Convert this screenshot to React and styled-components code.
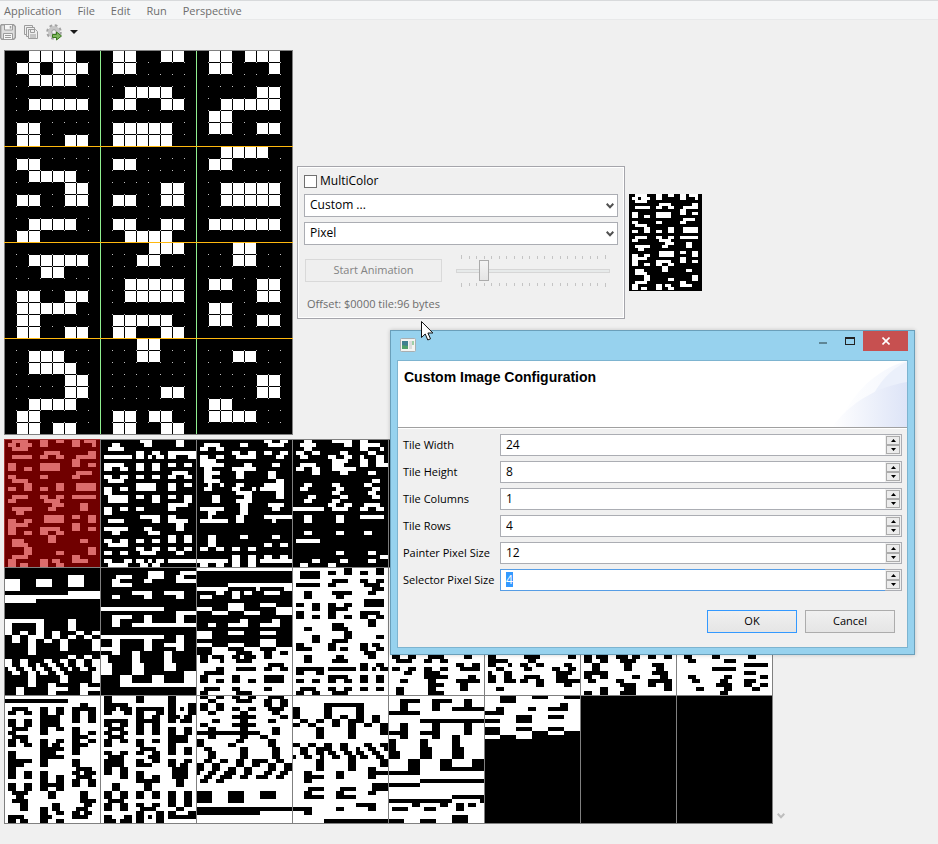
import React, { useEffect, useId, useRef, useState } from "react";
import styled, { createGlobalStyle } from "styled-components";

/* ---------- bitmap data: 128 glyphs of 8 bytes, the second half is inverted ---------- */

const GLYPHS = `
3C666E6E60623C00 00003C063E663E00 0060607C66667C00 00003C6060603C00
0006063E66663E00 00003C667E603C00 000E183E18181800 00003E66663E067C
0060607C66666600 0018003818183C00 000600060606063C 0060606C786C6600
0038181818183C00 0000667F7F6B6300 00007C6666666600 00003C6666663C00
00007C66667C6060 00003E66663E0606 00007C6660606000 00003E603C067C00
00187E1818180E00 0000666666663E00 00006666663C1800 0000636B7F3E3600
0000663C183C6600 00006666663E0C78 00007E0C18307E00 3C30303030303C00
0C12307C3062FC00 3C0C0C0C0C0C3C00 00183C7E18181818 0010307F7F301000
0000000000000000 1818181800001800 6666660000000000 6666FF66FF666600
183E603C067C1800 62660C1830664600 3C663C3867663F00 060C180000000000
0C18303030180C00 30180C0C0C183000 00663CFF3C660000 0018187E18180000
0000000000181830 0000007E00000000 0000000000181800 0003060C18306000
3C666E7666663C00 1818381818187E00 3C66060C30607E00 3C66061C06663C00
060E1E667F060600 7E607C0606663C00 3C66607C66663C00 7E660C1818181800
3C66663C66663C00 3C66663E06663C00 0000180000180000 0000180000181830
0E18306030180E00 00007E007E000000 70180C060C187000 3C66060C18001800
000000FFFF000000 183C667E66666600 7C66667C66667C00 3C66606060663C00
786C6666666C7800 7E60607860607E00 7E60607860606000 3C66606E66663C00
6666667E66666600 3C18181818183C00 1E0C0C0C0C6C3800 666C7870786C6600
6060606060607E00 63777F6B63636300 66767E7E6E666600 3C66666666663C00
7C66667C60606000 3C666666663C0E00 7C66667C786C6600 3C66603C06663C00
7E18181818181800 6666666666663C00 66666666663C1800 6363636B7F776300
66663C183C666600 6666663C18181800 7E060C1830607E00 181818FFFF181818
C0C03030C0C03030 1818181818181818 3333CCCC3333CCCC 3399CC663399CC66
0000000000000000 F0F0F0F0F0F0F0F0 00000000FFFFFFFF FF00000000000000
00000000000000FF C0C0C0C0C0C0C0C0 CCCC3333CCCC3333 0303030303030303
00000000CCCC3333 CC993366CC993366 0303030303030303 1818181F1F181818
000000000F0F0F0F 1818181F1F000000 000000F8F8181818 000000000000FFFF
0000001F1F181818 181818FFFF000000 000000FFFF181818 181818F8F8181818
C0C0C0C0C0C0C0C0 E0E0E0E0E0E0E0E0 0707070707070707 FFFF000000000000
FFFFFF0000000000 0000000000FFFFFF 0103066C78706000 00000000F0F0F0F0
0F0F0F0F00000000 181818F8F8000000 F0F0F0F000000000 F0F0F0F00F0F0F0F
`;

const HALF = GLYPHS.replace(/\s/g, "").match(/../g).map((h) => parseInt(h, 16));
const MEMORY = [...HALF, ...HALF.map((b) => b ^ 255)];

const TILE_W = 24;
const TILE_H = 32;
const TILE_BYTES = 96;

function tileRuns(index) {
  const runs = [];
  for (let y = 0; y < TILE_H; y++) {
    let start = -1;
    for (let x = 0; x <= TILE_W; x++) {
      const byte = MEMORY[index * TILE_BYTES + y * 3 + (x >> 3)] || 0;
      const on = x < TILE_W && (byte & (128 >> (x & 7))) !== 0;
      if (on && start < 0) start = x;
      if (!on && start >= 0) {
        runs.push([start, y, x - start]);
        start = -1;
      }
    }
  }
  return runs;
}

const tilePath = (index, size, ox = 0, oy = 0) =>
  tileRuns(index)
    .map(([x, y, n]) => `M${ox + x * size} ${oy + y * size}h${n * size}v${size}h${-n * size}z`)
    .join("");

/* ---------- styles ---------- */

const Global = createGlobalStyle`
  * { box-sizing: border-box; }
  body {
    margin: 0;
    background: #f0f0f0;
    color: #000;
    font: 12px/16px "Open Sans", "Noto Sans", sans-serif;
  }
  button, input, select { font: inherit; color: inherit; margin: 0; }
  svg { display: block; flex: none; }
`;

const Shell = styled.div`
  position: relative;
  min-height: 100vh;
  overflow: hidden;
`;

const MenuBar = styled.nav`
  display: flex;
  height: 20px;
  padding-left: 4px;
  gap: 16px;
  background: #f5f6f7;
  border-top: 1px solid #d8dadc;
  border-bottom: 1px solid #e8e9ea;
`;

const MenuItem = styled.button`
  padding: 2px 0 0;
  border: 0;
  background: none;
  color: #6d6d6d;
  font-size: 11px;
  line-height: 16px;
`;

const ToolBar = styled.div`
  display: flex;
  align-items: center;
  height: 24px;
  gap: 7px;
`;

const ToolButton = styled.button`
  display: flex;
  align-items: center;
  padding: 0;
  gap: 7px;
  border: 0;
  background: none;
`;

const Workspace = styled.main`
  display: flex;
  flex-direction: column;
  gap: 4px;
  padding: 6px 4px;
`;

const EditorRow = styled.section`
  display: flex;
  align-items: center;
  gap: 4px;
`;

const SelectorRow = styled.section`
  display: flex;
  align-items: flex-end;
`;

const ScrollHint = styled.div`
  padding: 0 4px 5px;
`;

const Panel = styled.form`
  display: flex;
  flex-direction: column;
  width: 328px;
  height: 153px;
  padding: 6px;
  gap: 5px;
  border: 1px solid #a5a5ab;
  box-shadow: inset 0 0 0 1px #fff;
`;

const CheckLabel = styled.label`
  display: flex;
  align-items: center;
  gap: 3px;
  height: 16px;
`;

const CheckBox = styled.input`
  appearance: none;
  width: 13px;
  height: 13px;
  border: 1px solid #707070;
  background: #fff;
`;

const ComboBox = styled.div`
  display: grid;
  align-items: center;
  & > * { grid-area: 1 / 1; }
  & > svg { justify-self: end; margin-right: 4px; pointer-events: none; }
`;

const Combo = styled.select`
  appearance: none;
  width: 100%;
  height: 23px;
  padding: 0 20px 2px 5px;
  border: 1px solid #abadb3;
  border-radius: 0;
  background: #fff;
`;

const AnimationRow = styled.div`
  display: flex;
  align-items: center;
  height: 42px;
  margin-top: 2px;
  padding: 0 8px 0 1px;
  gap: 14px;
`;

const PushButton = styled.button`
  flex: none;
  width: ${(p) => p.$width}px;
  height: 23px;
  padding: 0 0 1px;
  border: 1px solid ${(p) => (p.$primary ? "#3399ff" : "#acacac")};
  background: linear-gradient(#f0f0f0, #e5e5e5);
  font-size: 11px;
  &:disabled {
    border-color: #d9d9d9;
    background: #efefef;
    color: #838383;
  }
`;

const SliderBox = styled.div`
  display: flex;
  flex: 1;
  flex-direction: column;
  gap: 1px;
  & > svg { margin-left: 5px; }
`;

const Slider = styled.input`
  appearance: none;
  width: 100%;
  height: 22px;
  background: none;
  &::-webkit-slider-runnable-track {
    height: 4px;
    border: 1px solid #d6d6d6;
    background: #e7eaea;
  }
  &::-webkit-slider-thumb {
    appearance: none;
    width: 10px;
    height: 21px;
    margin-top: -10px;
    border: 1px solid #ababab;
    background: linear-gradient(#f4f4f4, #e5e5e5);
  }
`;

const Status = styled.p`
  margin: 2px 0 0 3px;
  color: #6d6d6d;
  font-size: 11px;
`;

const DialogWindow = styled.div`
  position: absolute;
  left: 390px;
  top: 330px;
  width: 525px;
  padding: 0 6px 6px;
  border: 1px solid #6a9fba;
  background: #97d2ee;
  box-shadow: 0 0 4px rgba(0, 0, 0, 0.2);
`;

const TitleBar = styled.header`
  display: flex;
  justify-content: space-between;
  height: 29px;
  padding-left: 3px;
  & > svg { margin-top: 7px; }
`;

const WindowButtons = styled.div`
  display: flex;
`;

const WindowButton = styled.button`
  display: flex;
  align-items: center;
  justify-content: center;
  width: ${(p) => (p.$close ? 45 : 27)}px;
  height: 20px;
  padding: 0;
  border: 0;
  background: ${(p) => (p.$close ? "#c75050" : "none")};
`;

const DialogBody = styled.div`
  border: 1px solid #7db4d0;
  background: #f0f0f0;
`;

const Banner = styled.div`
  display: flex;
  justify-content: space-between;
  height: 67px;
  padding-left: 6px;
  border-bottom: 1px solid #a0a0a0;
  background: #fff;
`;

const BannerTitle = styled.h1`
  margin: 8px 0 0;
  font: bold 14px/16px "Liberation Sans", Arial, sans-serif;
`;

const Fields = styled.form`
  display: grid;
  grid-template-columns: 92px 1fr;
  align-items: center;
  gap: 5px;
  padding: 5px 5px 0;
  border-top: 1px solid #fff;
`;

const FieldLabel = styled.label`
  font-size: 11px;
  white-space: nowrap;
`;

const Spinner = styled.div`
  display: flex;
  height: 22px;
  border: 1px solid #abadb3;
`;

const SpinnerInput = styled.input`
  flex: 1;
  min-width: 0;
  margin: -1px 0 -1px -1px;
  padding: 0 5px 1px;
  border: 1px solid #abadb3;
  border-right: 0;
  background: #fff;
  outline: 0;
  line-height: 15px;
  &:focus { border-color: #569de5; }
  &::selection { background: #3399ff; color: #fff; }
`;

const SpinnerButtons = styled.div`
  display: flex;
  flex-direction: column;
  padding: 1px;
`;

const SpinnerButton = styled.button`
  display: flex;
  align-items: center;
  justify-content: center;
  width: 14px;
  height: 9px;
  padding: 0;
  border: 1px solid #acacac;
  background: #ececec;
`;

const Actions = styled.footer`
  display: flex;
  justify-content: flex-end;
  gap: 8px;
  padding: 19px 12px 14px;
`;

const Pointer = styled.svg`
  position: absolute;
  left: 421px;
  top: 321px;
`;

/* ---------- drawings ---------- */

const range = (n) => Array.from({ length: n }, (_, i) => i);

function Painter() {
  const size = 12;
  const w = TILE_W * size;
  const h = TILE_H * size;
  const cells = tileRuns(0)
    .flatMap(([x, y, n]) =>
      range(n).map((i) => `M${(x + i) * size + 1} ${y * size + 1}h11v11h-11z`)
    )
    .join("");
  const dots = range(TILE_H - 1)
    .flatMap((y) => range(TILE_W - 1).map((x) => `M${(x + 1) * size} ${(y + 1) * size}h1v1h-1z`))
    .join("");
  return (
    <svg width={w + 1} height={h + 1} shapeRendering="crispEdges" role="img" aria-label="Painter">
      <rect width={w + 1} height={h + 1} />
      <path d={cells} fill="#fff" />
      <path d={dots} fill="#c0c0c0" />
      <path d={`M0 0H${w + 1}V${h + 1}H0ZM1 1V${h}H${w}V1Z`} fill="#808080" fillRule="evenodd" />
      {[8, 16].map((x) => (
        <rect key={x} x={x * size} y="1" width="1" height={h - 1} fill="#90f090" />
      ))}
      {[8, 16, 24].map((y) => (
        <rect key={y} y={y * size} width={w + 1} height="1" fill="#ffb90f" />
      ))}
    </svg>
  );
}

function Preview() {
  return (
    <svg width="73" height="97" shapeRendering="crispEdges" role="img" aria-label="Preview">
      <rect width="73" height="97" />
      <path d={tilePath(0, 3)} fill="#fff" />
    </svg>
  );
}

function Selector() {
  const size = 4;
  const tw = TILE_W * size;
  const th = TILE_H * size;
  return (
    <svg width="769" height="385" shapeRendering="crispEdges" role="img" aria-label="Tile selector">
      <rect width="769" height="385" />
      {range(24).map((i) => (
        <path key={i} d={tilePath(i, size, (i % 8) * tw, Math.floor(i / 8) * th)} fill="#fff" />
      ))}
      {range(9).map((x) => (
        <rect key={x} x={x * tw} width="1" height="385" fill="#808080" />
      ))}
      {range(4).map((y) => (
        <rect key={y} y={y * th} width="769" height="1" fill="#808080" />
      ))}
      <rect width={tw} height={th} fill="rgb(194,0,0)" fillOpacity="0.576" />
    </svg>
  );
}

const SaveIcon = () => (
  <svg width="16" height="16" viewBox="0 0 16 16" fill="none" stroke="#9c9c9c">
    <path d="M1.5 .7h12l1.800 1.800v11l-1.500 1.800h-12l-1.100-1.500v-12z" fill="#dedede" strokeWidth="1.400" />
    <path d="M4.5 1v5h8V1" fill="#f6f6f6" />
    <path d="M10.5 2v2.500" strokeWidth="1.500" />
    <path d="M3.500 15V9.500h9V15" fill="#f6f6f6" />
    <path d="M5 11.500h6M5 13.500h6" />
  </svg>
);

const SaveAllIcon = () => (
  <svg width="16" height="16" viewBox="0 0 16 16" fill="none" stroke="#9c9c9c">
    <path d="M3 10.500H1.500v-9h8V3" />
    <path d="M5 12.500H3.500v-9h8V5" />
    <path d="M5.500 5.500h7l2 2v7h-9z" fill="#ededed" />
    <path d="M7.500 6v2.500h4V6M7 11h6M7 13h6" />
  </svg>
);

const GearIcon = () => (
  <svg width="17" height="17" viewBox="0 0 17 17" fill="none">
    <circle cx="8" cy="8" r="6.500" stroke="#a2a2a2" strokeWidth="2.600" strokeDasharray="2.600 2.500" />
    <circle cx="8" cy="8" r="4.300" stroke="#c6c6c6" strokeWidth="3.500" />
    <circle cx="8" cy="8" r="2.300" fill="#f0f0f0" stroke="#999" />
    <path d="M6.500 10.500h4V8L15.500 12l-5 4v-2.500h-4z" fill="#7cb65a" stroke="#39771f" />
  </svg>
);

const DropArrow = () => (
  <svg width="8" height="4" viewBox="0 0 8 4">
    <path d="M0 0h8L4 4z" fill="#1a1a1a" />
  </svg>
);

const Chevron = ({ color }) => (
  <svg width="8" height="6" viewBox="0 0 8 6" fill="none" stroke={color} strokeWidth="2">
    <path d="M.7 .8L4 4.200 7.300 .8" />
  </svg>
);

function Ticks({ flip }) {
  return (
    <svg width="145" height="4" shapeRendering="crispEdges">
      {range(20).map((i) => {
        const end = i === 0 || i === 19;
        return (
          <rect
            key={i}
            x={Math.round((i * 144) / 19)}
            y={end || flip ? 0 : 1}
            width="1"
            height={end ? 4 : 3}
            fill="#c4c4c4"
          />
        );
      })}
    </svg>
  );
}

const WindowIcon = () => (
  <svg width="16" height="14" viewBox="0 0 16 14">
    <rect x=".5" y=".5" width="15" height="13" rx="1" fill="#f4f4f2" stroke="#a9aeb0" />
    <rect x="2" y="3" width="6" height="8" fill="#3f7f8f" />
    <path d="M2 11V7l6 1v3z" fill="#4fa06a" />
    <rect x="9" y="3" width="3" height="8" fill="#dcdcdc" />
    <rect x="12" y="3" width="2" height="4" fill="#9fd0a8" />
  </svg>
);

const Swoosh = () => (
  <svg width="75" height="66" viewBox="0 0 75 66">
    <defs>
      <linearGradient id="swoosh-strong">
        <stop offset="0" stopColor="#fff" />
        <stop offset="1" stopColor="#dde4f7" />
      </linearGradient>
      <linearGradient id="swoosh-soft">
        <stop offset="0" stopColor="#fff" />
        <stop offset="1" stopColor="#f3f6fd" />
      </linearGradient>
    </defs>
    <path d="M6 66C18 34 44 8 75 0V66z" fill="url(#swoosh-soft)" />
    <path d="M40 36C48 20 60 7 75 1V36z" fill="#ebf0fb" />
    <path d="M0 66C18 42 44 26 75 21V66z" fill="url(#swoosh-strong)" />
  </svg>
);

/* ---------- pieces ---------- */

function ComboField({ label, value }) {
  return (
    <ComboBox>
      <Combo aria-label={label} defaultValue={value}>
        <option>{value}</option>
      </Combo>
      <Chevron color="#505050" />
    </ComboBox>
  );
}

function NumberField({ label, initial, active }) {
  const id = useId();
  const ref = useRef(null);
  const [value, setValue] = useState(initial);
  const step = (d) => setValue((v) => String(Number(v) + d));
  useEffect(() => {
    if (active) {
      ref.current.focus();
      ref.current.select();
    }
  }, [active]);
  return (
    <>
      <FieldLabel htmlFor={id}>{label}</FieldLabel>
      <Spinner>
        <SpinnerInput
          id={id}
          ref={ref}
          inputMode="numeric"
          value={value}
          onChange={(e) => setValue(e.target.value)}
        />
        <SpinnerButtons>
          <SpinnerButton type="button" aria-label={`Increase ${label}`} onClick={() => step(1)}>
            <svg width="5" height="3" viewBox="0 0 5 3"><path d="M0 3L2.500 0 5 3z" /></svg>
          </SpinnerButton>
          <SpinnerButton type="button" aria-label={`Decrease ${label}`} onClick={() => step(-1)}>
            <svg width="5" height="3" viewBox="0 0 5 3"><path d="M0 0h5L2.500 3z" /></svg>
          </SpinnerButton>
        </SpinnerButtons>
      </Spinner>
    </>
  );
}

const FIELDS = [
  ["Tile Width", "24"],
  ["Tile Height", "8"],
  ["Tile Columns", "1"],
  ["Tile Rows", "4"],
  ["Painter Pixel Size", "12"],
  ["Selector Pixel Size", "4"],
];

function ConfigDialog() {
  return (
    <DialogWindow role="dialog" aria-label="Custom Image Configuration">
      <TitleBar>
        <WindowIcon />
        <WindowButtons>
          <WindowButton aria-label="Minimize">
            <svg width="8" height="8"><rect y="5" width="8" height="2" fill="#5e8696" /></svg>
          </WindowButton>
          <WindowButton aria-label="Maximize">
            <svg width="10" height="8" shapeRendering="crispEdges">
              <path d="M0 0h10v8H0zM1 2v5h8V2z" fill="#222" fillRule="evenodd" />
            </svg>
          </WindowButton>
          <WindowButton $close aria-label="Close">
            <svg width="8" height="8" viewBox="0 0 8 8" stroke="#fff" strokeWidth="1.600">
              <path d="M.5 .5l7 7M7.500 .5l-7 7" />
            </svg>
          </WindowButton>
        </WindowButtons>
      </TitleBar>
      <DialogBody>
        <Banner>
          <BannerTitle>Custom Image Configuration</BannerTitle>
          <Swoosh />
        </Banner>
        <Fields>
          {FIELDS.map(([label, value], i) => (
            <NumberField key={label} label={label} initial={value} active={i === 5} />
          ))}
        </Fields>
        <Actions>
          <PushButton type="button" $width={90} $primary>OK</PushButton>
          <PushButton type="button" $width={90}>Cancel</PushButton>
        </Actions>
      </DialogBody>
    </DialogWindow>
  );
}

export default function App() {
  return (
    <Shell>
      <Global />
      <MenuBar>
        {["Application", "File", "Edit", "Run", "Perspective"].map((name) => (
          <MenuItem key={name}>{name}</MenuItem>
        ))}
      </MenuBar>
      <ToolBar>
        <ToolButton aria-label="Save"><SaveIcon /></ToolButton>
        <ToolButton aria-label="Save all"><SaveAllIcon /></ToolButton>
        <ToolButton aria-label="Run"><GearIcon /><DropArrow /></ToolButton>
      </ToolBar>
      <Workspace>
        <EditorRow>
          <Painter />
          <Panel>
            <CheckLabel>
              <CheckBox type="checkbox" />
              MultiColor
            </CheckLabel>
            <ComboField label="Format" value="Custom ..." />
            <ComboField label="Paint mode" value="Pixel" />
            <AnimationRow>
              <PushButton type="button" $width={137} disabled>Start Animation</PushButton>
              <SliderBox>
                <Ticks />
                <Slider type="range" aria-label="Animation speed" min="0" max="19" defaultValue="3" disabled />
                <Ticks flip />
              </SliderBox>
            </AnimationRow>
            <Status>Offset: $0000 tile:96 bytes</Status>
          </Panel>
          <Preview />
        </EditorRow>
        <SelectorRow>
          <Selector />
          <ScrollHint><Chevron color="#bdbdbd" /></ScrollHint>
        </SelectorRow>
      </Workspace>
      <ConfigDialog />
      <Pointer width="13" height="20" viewBox="0 0 13 20">
        <path d="M.5 .5v16l3.700-3.500 2.600 6 2.700-1.200-2.600-5.800h5z" fill="#fff" stroke="#111" />
      </Pointer>
    </Shell>
  );
}
